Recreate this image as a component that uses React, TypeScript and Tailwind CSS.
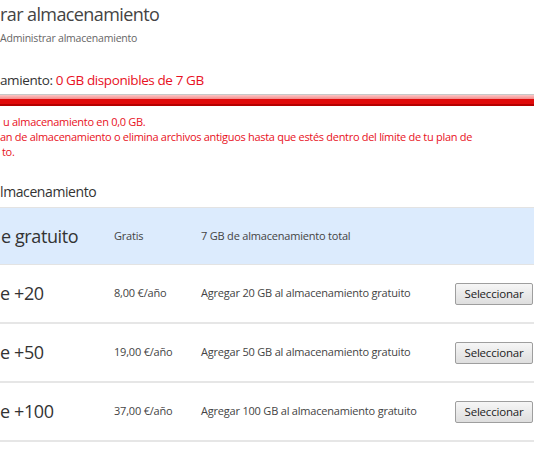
export default function App() {
  const font = { fontFamily: '"Open Sans", "Noto Sans", sans-serif' };
  const rows = [
    { name: "e +20", price: "8,00 €/año", desc: "Agregar 20 GB al almacenamiento gratuito" },
    { name: "e +50", price: "19,00 €/año", desc: "Agregar 50 GB al almacenamiento gratuito" },
    { name: "e +100", price: "37,00 €/año", desc: "Agregar 100 GB al almacenamiento gratuito" },
  ];
  return (
    <div className="w-[534px] h-[462px] overflow-hidden bg-white text-[#333]" style={font}>
      <div className="h-[28px] text-[18px] leading-[28px] text-[#444] tracking-[-0.6px]">rar almacenamiento</div>
      <div className="mt-[2px] h-[16px] text-[10.5px] leading-[16px] text-[#666] tracking-[-0.2px]">Administrar almacenamiento</div>
      <div className="mt-[25px] h-[18px] text-[13.5px] leading-[18px] tracking-[-0.4px]">
        <span className="text-[#333]">amiento: </span>
        <span className="text-[#e81123]">0 GB disponibles de 7 GB</span>
      </div>
      <div className="mt-[5px] h-[12px] flex flex-col">
        <div className="h-[1px] bg-[#c8c8c8]" />
        <div className="h-[4px] bg-gradient-to-b from-[#fcc6c6] to-[#f28b8b]" />
        <div className="h-[5px] bg-[#e00a0a]" />
        <div className="h-[2px] bg-[#b50000]" />
      </div>
      <div className="mt-[8px] text-[11px] leading-[15px] text-[#e81123] tracking-[-0.3px]">
        <div className="pl-[3px]">u almacenamiento en 0,0 GB.</div>
        <div>an de almacenamiento o elimina archivos antiguos hasta que estés dentro del límite de tu plan de</div>
        <div className="pl-[2px]">to.</div>
      </div>
      <div className="mt-[23px] h-[20px] text-[14px] leading-[20px] text-[#333] tracking-[-0.4px]">lmacenamiento</div>
      <div className="mt-[5px] border-t border-[#e3e3e3]">
        <div className="h-[57px] flex items-center bg-[#dcebfd] border-b border-[#e3e3e3]">
          <div className="w-[114px] pl-[1px] text-[18px] text-[#333] tracking-[-0.4px]">e gratuito</div>
          <div className="w-[87px] text-[11px] text-[#444] tracking-[-0.2px]">Gratis</div>
          <div className="flex-1 text-[11px] text-[#444] tracking-[-0.2px]">7 GB de almacenamiento total</div>
        </div>
        {rows.map((r) => (
          <div key={r.name} className="h-[59px] flex items-center border-b-2 border-[#e6e6e6]">
            <div className="w-[114px] text-[18px] text-[#333] tracking-[-0.4px]">{r.name}</div>
            <div className="w-[87px] text-[11px] text-[#444] tracking-[-0.2px]">{r.price}</div>
            <div className="w-[254px] text-[11px] text-[#444] tracking-[-0.2px] whitespace-nowrap">{r.desc}</div>
            <button className="w-[78px] h-[22px] border border-[#9e9e9e] rounded-[2px] bg-gradient-to-b from-[#f6f6f6] to-[#dedede] text-[11.5px] text-[#222] tracking-[-0.2px]" style={font}>
              Seleccionar
            </button>
          </div>
        ))}
      </div>
    </div>
  );
}
